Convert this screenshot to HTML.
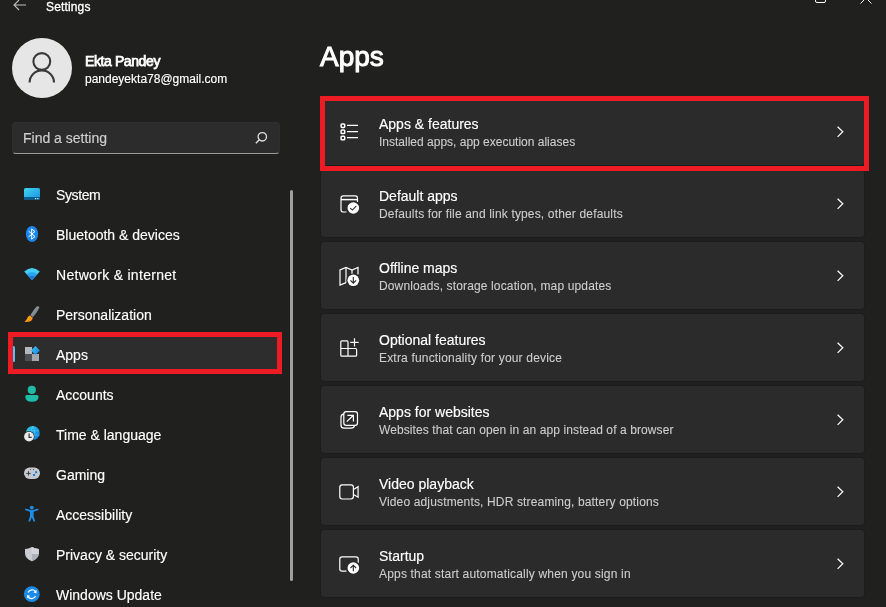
<!DOCTYPE html>
<html><head><meta charset="utf-8">
<style>
*{margin:0;padding:0;box-sizing:border-box}
html,body{width:886px;height:607px;overflow:hidden;background:#20201f;font-family:"Liberation Sans",sans-serif;color:#fff}
.a{position:absolute}
.t{position:absolute;line-height:1;white-space:nowrap;will-change:transform;-webkit-text-stroke:0.15px currentColor}
.nav{position:absolute;will-change:transform;-webkit-text-stroke:0.15px #fff;left:56px;font-size:14px;line-height:1;color:#fff}
.card{position:absolute;left:320px;width:545px;height:69px;background:#2b2b2b;border:1px solid #1c1c1c;border-radius:4px}
.ct{position:absolute;will-change:transform;-webkit-text-stroke:0.15px #fff;left:379px;font-size:14px;line-height:1;color:#fff;white-space:nowrap}
.cs{position:absolute;will-change:transform;-webkit-text-stroke:0.1px #ccc;left:379px;font-size:12px;line-height:1;color:#cccccc;white-space:nowrap}
svg{position:absolute;overflow:visible}
</style></head><body>

<!-- title bar -->
<svg style="left:13px;top:-1px" width="14" height="12" viewBox="0 0 14 12"><path d="M13 6H1.5M6 1L1 6l5 5" fill="none" stroke="#bdbdbd" stroke-width="1.1"/></svg>
<div class="t" style="left:46px;top:0.5px;font-size:12px;color:#fff;letter-spacing:0.15px;-webkit-text-stroke:0.3px #fff">Settings</div>
<svg style="left:815px;top:-6px" width="11" height="9" viewBox="0 0 11 9"><rect x="0.5" y="0.5" width="10" height="8" rx="1.5" fill="none" stroke="#fff" stroke-width="1"/></svg>
<svg style="left:860px;top:-6px" width="12" height="10" viewBox="0 0 12 10"><path d="M0.5 9.5L6 4 11.5 9.5" fill="none" stroke="#fff" stroke-width="1"/></svg>

<!-- profile -->
<div class="a" style="left:12px;top:38px;width:60px;height:60px;border-radius:50%;background:#e6e6e6"></div>
<svg style="left:0;top:0" width="886" height="110"><circle cx="41.8" cy="61.5" r="8.4" fill="none" stroke="#3a3a3a" stroke-width="2.1"/><path d="M29.6 82.6A12.2 12.2 0 0 1 54 82.6" fill="none" stroke="#3a3a3a" stroke-width="2.1"/></svg>
<div class="t" style="left:85px;top:54px;font-size:14px;letter-spacing:-0.4px;-webkit-text-stroke:0.75px #fff">Ekta Pandey</div>
<div class="t" style="left:85px;top:73px;font-size:12px">pandeyekta78@gmail.com</div>

<!-- search -->
<div class="a" style="left:12px;top:122px;width:268px;height:32px;background:#2c2c2c;border-radius:4px;border:1px solid #2f2f2f;border-bottom:1px solid #9a9a9a"></div>
<div class="t" style="left:23px;top:131px;font-size:14px;color:#cfcfcf">Find a setting</div>
<svg style="left:255px;top:131px" width="12" height="13" viewBox="0 0 12 13"><circle cx="7.3" cy="5.8" r="4.2" fill="none" stroke="#e0e0e0" stroke-width="1.3"/><path d="M4.3 8.8L0.8 12.3" stroke="#e0e0e0" stroke-width="1.4"/></svg>

<!-- nav selection -->
<div class="a" style="left:9px;top:334px;width:272px;height:38px;background:#2d2d2d;border-radius:4px"></div>
<div class="a" style="left:12px;top:346px;width:3px;height:16px;background:#4cc2ff;border-radius:2px"></div>

<!-- nav items -->
<div class="nav" style="top:188px;letter-spacing:-0.4px">System</div>
<div class="nav" style="top:228px">Bluetooth &amp; devices</div>
<div class="nav" style="top:268px;letter-spacing:0.3px">Network &amp; internet</div>
<div class="nav" style="top:308px">Personalization</div>
<div class="nav" style="top:348px">Apps</div>
<div class="nav" style="top:388px">Accounts</div>
<div class="nav" style="top:428px">Time &amp; language</div>
<div class="nav" style="top:468px">Gaming</div>
<div class="nav" style="top:508px">Accessibility</div>
<div class="nav" style="top:548px">Privacy &amp; security</div>
<div class="nav" style="top:588px">Windows Update</div>

<!-- scrollbar -->
<div class="a" style="left:290px;top:190px;width:2.5px;height:391px;background:#9f9f9f;border-radius:2px"></div>

<!-- header -->
<div class="t" style="left:320px;top:42.5px;font-size:28px;letter-spacing:0px;-webkit-text-stroke:1px #fff">Apps</div>

<!-- cards -->
<div class="card" style="top:97px"></div>
<div class="card" style="top:169px"></div>
<div class="card" style="top:241px"></div>
<div class="card" style="top:313px"></div>
<div class="card" style="top:385px"></div>
<div class="card" style="top:457px"></div>
<div class="card" style="top:529px"></div>

<div class="ct" style="top:117px">Apps &amp; features</div>
<div class="cs" style="top:136px">Installed apps, app execution aliases</div>
<div class="ct" style="top:189px">Default apps</div>
<div class="cs" style="top:208px;letter-spacing:0.16px">Defaults for file and link types, other defaults</div>
<div class="ct" style="top:261px">Offline maps</div>
<div class="cs" style="top:280px;letter-spacing:0.14px">Downloads, storage location, map updates</div>
<div class="ct" style="top:333px">Optional features</div>
<div class="cs" style="top:352px;letter-spacing:0.18px">Extra functionality for your device</div>
<div class="ct" style="top:405px">Apps for websites</div>
<div class="cs" style="top:424px;letter-spacing:0.1px">Websites that can open in an app instead of a browser</div>
<div class="ct" style="top:477px">Video playback</div>
<div class="cs" style="top:496px;letter-spacing:0.15px">Video adjustments, HDR streaming, battery options</div>
<div class="ct" style="top:549px">Startup</div>
<div class="cs" style="top:568px;letter-spacing:0.18px">Apps that start automatically when you sign in</div>


<!-- nav icons -->
<svg style="left:0;top:0" width="300" height="607">
<defs>
<linearGradient id="gSys" x1="0" y1="0" x2="1" y2="1"><stop offset="0" stop-color="#3ed6f2"/><stop offset="1" stop-color="#1a8ee0"/></linearGradient>
<linearGradient id="gWifi" x1="0" y1="0" x2="0" y2="1"><stop offset="0" stop-color="#45d0fb"/><stop offset="1" stop-color="#1670cc"/></linearGradient>
<linearGradient id="gHandle" x1="0" y1="0" x2="1" y2="1"><stop offset="0" stop-color="#9aa0a6"/><stop offset="1" stop-color="#6f767d"/></linearGradient>
<linearGradient id="gBrist" x1="0" y1="0" x2="1" y2="1"><stop offset="0" stop-color="#ffc21a"/><stop offset="1" stop-color="#f47a12"/></linearGradient>
<linearGradient id="gDia" x1="0" y1="0" x2="1" y2="1"><stop offset="0" stop-color="#3cc6fa"/><stop offset="1" stop-color="#1280e0"/></linearGradient>
<linearGradient id="gGlobe" x1="0" y1="0" x2="1" y2="1"><stop offset="0" stop-color="#2fd0e8"/><stop offset="0.6" stop-color="#1a9be6"/><stop offset="1" stop-color="#1076d4"/></linearGradient>
<linearGradient id="gShield" x1="0" y1="0" x2="1" y2="1"><stop offset="0" stop-color="#d4d8dc"/><stop offset="1" stop-color="#a8adb3"/></linearGradient>
</defs>
<!-- System -->
<rect x="24" y="188" width="16" height="12" rx="1.5" fill="url(#gSys)"/>
<rect x="24" y="197" width="16" height="3" fill="#0f5c8c"/>
<rect x="35" y="198" width="1.2" height="1.2" fill="#cfe8f5"/><rect x="37.2" y="198" width="1.2" height="1.2" fill="#cfe8f5"/>
<!-- Bluetooth -->
<ellipse cx="32" cy="234" rx="6.1" ry="8" fill="#1a86f2"/>
<path d="M28.6 231.2L35 236.5 31.7 239.1V228.9L35 231.5 28.6 236.8" fill="none" stroke="#fff" stroke-width="1" stroke-linejoin="round"/>
<!-- Wifi -->
<path d="M24.2 271.6Q32 264.6 39.8 271.6L32 280Z" fill="#45cdf8"/>
<path d="M26.7 274.3Q32 269.6 37.3 274.3L32 280Z" fill="#2aa4ee"/>
<path d="M29.1 276.9Q32 274.4 34.9 276.9L32 280Z" fill="#1a7ad6"/>
<!-- Paintbrush -->
<path d="M36.6 306.6Q38.6 305.6 39.5 307.4Q37 312.5 32.9 317.3L30.3 315.3Q33.6 309.8 36.6 306.6Z" fill="url(#gHandle)"/>
<path d="M29.8 315.6L32.8 317.8Q32.5 320.2 30.6 321.3Q27.4 322.2 24.3 321.8Q26.2 320.6 27 318.7Q27.8 316.3 29.8 315.6Z" fill="url(#gBrist)"/>
<!-- Apps -->
<rect x="25" y="347" width="7" height="7" fill="#b4b8bd"/>
<rect x="25" y="354" width="7" height="7" fill="#4d5156"/>
<rect x="32" y="354" width="7" height="7" fill="#a3a7ad"/>
<path d="M35.4 346.1L39.8 350.5 35.4 354.9 31 350.5Z" fill="url(#gDia)"/>
<!-- Accounts -->
<circle cx="31.8" cy="389.9" r="4.1" fill="#1fbba7"/>
<path d="M25.3 396.5Q25.3 394.9 26.9 394.9H36.9Q38.5 394.9 38.5 396.5Q38.5 401.8 31.9 401.8Q25.3 401.8 25.3 396.5Z" fill="#1fbca8"/>
<!-- Time & language -->
<circle cx="32.8" cy="433" r="6.9" fill="url(#gGlobe)"/>
<path d="M32.8 426.1Q29.5 433 32.8 439.9Q36.1 433 32.8 426.1M26.2 430.8H39.4M26 435.2H39.6" fill="none" stroke="#7fdcf8" stroke-width="0.7" opacity="0.55"/>
<circle cx="29" cy="436.6" r="5.5" fill="#202020"/>
<circle cx="29" cy="436.6" r="4.9" fill="#eaeaea"/>
<path d="M29.1 433.6V437.3H31.7" fill="none" stroke="#333" stroke-width="1.2"/>
<!-- Gaming -->
<rect x="24" y="467.6" width="16" height="11.3" rx="5.6" fill="#c5c9cd"/>
<path d="M28.5 471.2V475.6M26.3 473.4H30.7" stroke="#3b3e42" stroke-width="1"/>
<rect x="35.1" y="471.2" width="2" height="2" fill="#1a7fe0"/><rect x="33" y="474" width="2" height="2" fill="#1a7fe0"/>
<circle cx="30.5" cy="469.6" r="0.6" fill="#55595d"/><circle cx="33.5" cy="469.6" r="0.6" fill="#55595d"/>
<!-- Accessibility -->
<circle cx="31.8" cy="507.6" r="1.9" fill="#1d8fea"/>
<path d="M26 509.5L31 511.2H32.6L37.6 509.5" fill="none" stroke="#1d8fea" stroke-width="1.8" stroke-linecap="round"/>
<path d="M30 510.6H33.6V516.2L35.3 521.6H33.6L31.8 517.2L30 521.6H28.3L30 516.2Z" fill="#1d8fea"/>
<!-- Shield -->
<path d="M31.9 547Q28.5 549.1 25 549.1V553.2Q25 558.3 31.9 561.2Q38.8 558.3 38.8 553.2V549.1Q35.3 549.1 31.9 547Z" fill="#c9cdd1"/>
<path d="M31.9 547Q35.3 549.1 38.8 549.1V553.2Q38.8 558.3 31.9 561.2V554H38.8" fill="#aeb2b7"/>
<path d="M31.9 547V554H38.8V549.1Q35.3 549.1 31.9 547Z" fill="#d3d6da"/>
<!-- Windows Update -->
<circle cx="31.8" cy="594.2" r="7.9" fill="#1a8ae8"/>
<path d="M28 592.5A4.3 4.3 0 0 1 35.6 591.8M35.6 596A4.3 4.3 0 0 1 28 596.6" fill="none" stroke="#fff" stroke-width="1.1"/>
<path d="M36.6 589.8L36.5 593.3 33.4 592.6Z" fill="#fff"/>
<path d="M27 598.6L27.1 595.1 30.2 595.8Z" fill="#fff"/>
</svg>

<!-- card icons + chevrons -->
<svg style="left:0;top:0" width="886" height="607" fill="none" stroke="#fff" stroke-width="1.2">
<!-- list -->
<rect x="341.1" y="123.9" width="3.6" height="3.6" rx="0.9" stroke-width="1.5"/>
<rect x="341.1" y="130" width="3.6" height="3.6" rx="0.9" stroke-width="1.5"/>
<rect x="341.1" y="136.2" width="3.6" height="3.6" rx="0.9" stroke-width="1.5"/>
<path d="M347 125.3H358M347 131.6H358M347 137.7H358"/>
<!-- default apps -->
<path d="M346.5 212H343.2Q341 212 341 209.8V198.3Q341 195.8 343.3 195.8H355.3Q357.5 195.8 357.5 198.3V202"/>
<path d="M341 199.6H357.5" stroke-width="1.5"/>
<circle cx="353.3" cy="208" r="6.9" fill="#2b2b2b" stroke="none"/><circle cx="353.3" cy="208" r="5.8" fill="#fff" stroke="none"/>
<path d="M350.3 208.1L352.4 210.1 356.2 206.2" stroke="#2b2b2b" stroke-width="1.1"/>
<!-- map -->
<path d="M346 282.6L340 285V270L346 267.5L352 270L358 267.5V274.5"/>
<path d="M346 267.5V282.6M352 270V275"/>
<circle cx="353.3" cy="280.3" r="6.9" fill="#2b2b2b" stroke="none"/><circle cx="353.3" cy="280.3" r="5.8" fill="#fff" stroke="none"/>
<path d="M353.3 277V283.1M350.5 280.3L353.3 283.1 356.1 280.3" stroke="#2b2b2b" stroke-width="1.15"/>
<!-- optional features -->
<path d="M348 348.5V341.8Q348 340.8 347 340.8H341.8Q340.8 340.8 340.8 341.8V355.2Q340.8 356.2 341.8 356.2H355.6Q356.6 356.2 356.6 355.2V349.5Q356.6 348.5 355.6 348.5H340.8M348 348.5V356.2"/>
<path d="M354.5 338.2V346.6M350.3 342.4H358.7"/>
<!-- apps for websites -->
<path d="M343.9 413.8Q341 414.4 341 417.3V425.2Q341 428.2 344 428.2H351.2Q354 428.2 354.6 425.4"/>
<rect x="343.8" y="411.6" width="13.7" height="13.7" rx="2.4"/>
<path d="M346.8 421.6L353.4 415.2M347.4 415.4H353.4V421.4"/>
<!-- video -->
<rect x="339.8" y="484.8" width="13.6" height="14.2" rx="2.4"/>
<path d="M354 489.3L358.1 486.7V497.2L354 494.7"/>
<!-- startup -->
<path d="M346.5 571.2H342.1Q339.8 571.2 339.8 569V559Q339.8 556.8 342.1 556.8H356Q358.2 556.8 358.2 559V562.8"/>
<circle cx="353.3" cy="568" r="6.9" fill="#2b2b2b" stroke="none"/><circle cx="353.3" cy="568" r="5.8" fill="#fff" stroke="none"/>
<path d="M353.3 571.3V565.2M350.5 568L353.3 565.2 356.1 568" stroke="#2b2b2b" stroke-width="1.15"/>
<!-- chevrons -->
<path d="M837.6 126.7L842.8 131.8 837.6 136.9"/>
<path d="M837.6 198.7L842.8 203.8 837.6 208.9"/>
<path d="M837.6 270.7L842.8 275.8 837.6 280.9"/>
<path d="M837.6 342.7L842.8 347.8 837.6 352.9"/>
<path d="M837.6 414.7L842.8 419.8 837.6 424.9"/>
<path d="M837.6 486.7L842.8 491.8 837.6 496.9"/>
<path d="M837.6 558.7L842.8 563.8 837.6 568.9"/>
</svg>

<!-- red boxes -->
<div class="a" style="left:320px;top:96px;width:549px;height:75px;border:5px solid #ed1c24"></div>
<div class="a" style="left:8px;top:332px;width:274px;height:42px;border:5px solid #ed1c24"></div>

</body></html>
